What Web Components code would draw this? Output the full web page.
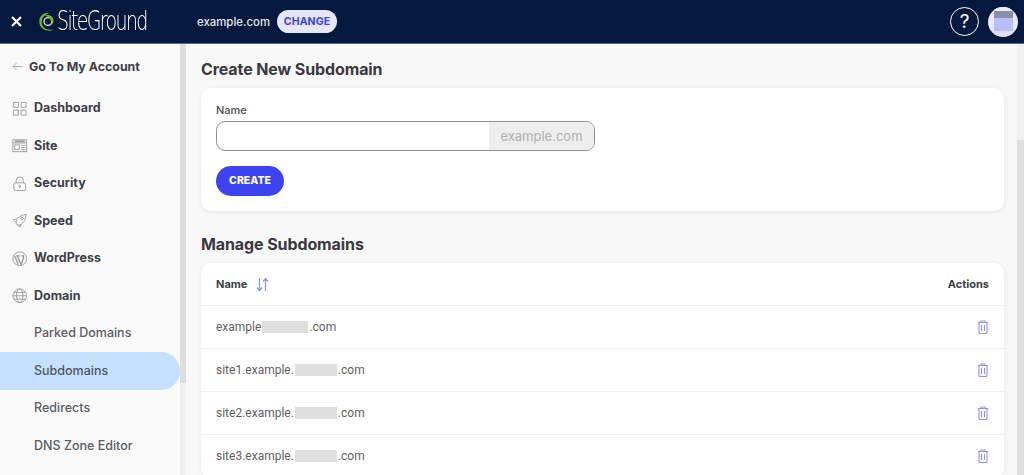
<!DOCTYPE html>
<html lang="en"><head><meta charset="utf-8"><title>Subdomains</title>
<style>
html,body{margin:0;padding:0;height:475px;overflow:hidden;background:#f8f8f8}
body{font-family:Inter,"Liberation Sans",sans-serif}
</style></head>
<body>
<sg-app></sg-app>
<script>
const ICONS={
dashboard:'<path d="M1.500 1.500h5.500v5.500h-5.500zM10 1.500h5.500v5.500h-5.500zM1.500 10h5.500v5.500h-5.500zM10 10h5.500v5.500h-5.500z"/>',
site:'<rect x="1" y="2" width="15" height="13"/><path d="M1 5.500h15"/><rect x="3" y="7.500" width="5" height="5"/><path d="M10 8h4.500M10 10.500h4.500M10 13h4.500"/><path d="M3 3.700h11" stroke-width="2"/>',
security:'<rect x="2" y="7.500" width="13" height="8.500" rx="2"/><path d="M4.500 7.500V5a4 4 0 0 1 8 0v2.500"/><circle cx="8.500" cy="11" r="1"/><path d="M8.500 12v1.500"/>',
speed:'<path d="M5 12.500C3 8 7 2.500 15.500 1.500 15 10 10 14 5.500 13z"/><path d="M5 6.500 1.500 7.500 4 10M10 12l-1 3.500-3-2.500"/><circle cx="11" cy="6" r="1.300"/>',
wp:'<circle cx="8.500" cy="8.500" r="7.500"/><path d="M3 5.500 7 15M6 5.500 10 15l2.500-7c.5-1.500 0-2.500-.5-3.500M4.500 5.300h4M10 5.300h2" stroke-width="1.500"/>',
globe:'<circle cx="8.500" cy="8.500" r="7.500"/><ellipse cx="8.500" cy="8.500" rx="3.500" ry="7.500"/><path d="M1 8.500h15M2.200 4.800h12.600M2.200 12.200h12.600"/>'
};
function def(name,css,html,extra){
  const t=document.createElement('template');
  t.innerHTML=`<style>${css}</style>${html}`;
  customElements.define(name,class extends HTMLElement{
    constructor(){super();this.attachShadow({mode:'open'}).appendChild(t.content.cloneNode(true));}
    connectedCallback(){extra&&extra(this)}
  });
}
def('sg-top',`
:host{display:flex;align-items:center;height:43px;background:#04193d;border-bottom:1px solid #5d6b83;color:#fff}
.x{width:11px;height:11px;margin-left:11px;flex:none}
.logo{display:flex;align-items:center;margin-left:16px;width:132px;flex:none;overflow:hidden;height:43px}
.logo svg{flex:none}
.word{flex:none;font:200 25px/30px "DejaVu Sans",sans-serif;display:inline-block;letter-spacing:-2.200px;transform:scaleX(.76) scaleY(1.05);transform-origin:left center;white-space:nowrap;color:#fff}
.dom{margin-left:27px;font:500 11.400px/16px Inter,sans-serif;color:#e4e7ee}
.chg{margin-left:7px;height:23px;width:60px;border-radius:12px;background:#e6e6fd;color:#3d43f0;font:700 10.500px/23px Inter,sans-serif;text-align:center;letter-spacing:.1px}
.sp{flex:1}
.help{width:27px;height:27px;border:1.500px solid #fff;border-radius:50%;font:400 19px/27px Inter,sans-serif;text-align:center;margin-right:9px}
.ava{width:30px;height:30px;border-radius:50%;background:#e9e9fb;margin-right:6px;display:flex;justify-content:center;overflow:hidden}
.ava i{display:block;width:19px;height:30px;background:linear-gradient(#e9e9fb 0 4px,#8a90aa 4px 11px,#b9bff8 11px 24px,#dcdefa 24px)}
`,`<svg class="x" viewBox="0 0 11 11"><path d="M1 1l9 9M10 1l-9 9" stroke="#fff" stroke-width="2.200"/></svg>
<div class="logo"><svg width="19" height="23" viewBox="0 0 22 24" fill="none"><path d="M13 2C6 2 1.500 6 1.500 12c0 6 4 9.500 9.500 10.500 4 .5 6-.5 7-1-4 .5-10 0-12.500-4C3.500 14 4 8 8 5c2-1.500 4-2.500 5-3z" fill="#74b62e"/><circle cx="11.500" cy="12" r="4.500" stroke="#dfe6d8" stroke-width="1.600"/><path d="M8 5c5-2 10 1 10 6 0 2-1 4-2 5 0-5-2-9-8-11z" fill="#74b62e"/></svg><span class="word">SiteGround</span></div>
<span class="dom">example.com</span><span class="chg">CHANGE</span><span class="sp"></span>
<span class="help">?</span><span class="ava"><i></i></span>`);
def('sg-nav-item',`
:host{display:flex;align-items:center;height:37.500px;padding-left:12px;font:700 12.500px/16px Inter,sans-serif;color:#3e3e46;gap:6.500px}
:host([sub]){font-weight:500;padding-left:34px;color:#5c5c62}
:host([active]){background:#c5e1fd;border-radius:0 19px 19px 0;color:#4f5566}
svg{width:15.500px;height:15.500px;fill:none;stroke:#9a9a9a;stroke-width:1;flex:none}
`,`<svg viewBox="0 0 17 17"></svg><slot></slot>`,el=>{
  const s=el.shadowRoot.querySelector('svg');
  if(el.hasAttribute('icon'))s.innerHTML=ICONS[el.getAttribute('icon')];else s.remove();
});
def('sg-side',`
:host{display:flex;flex:none;width:186px;background:#fafafa;overflow:hidden}
.col{width:180px;flex:none}
.back{display:flex;align-items:center;gap:6px;height:45.500px;padding:0 0 0 12px;font:700 12.400px/16px Inter,sans-serif;color:#3e3e46}
.back svg{width:11px;height:9px;flex:none}
.bar{width:6px;flex:none;background:#f0f0f0;display:flex}
.bar i{display:block;width:6px;height:339px;background:#dedede}
`,`<div class="col"><div class="back"><svg viewBox="0 0 11 9" fill="none" stroke="#b0b0b0"><path d="M10.500 4.500H1M4.500 1 1 4.500 4.500 8"/></svg><span>Go To My Account</span></div><slot></slot></div><div class="bar"><i></i></div>`);
def('sg-card',`
:host{display:block;flex:none;background:#fff;border-radius:10px;box-shadow:0 1px 5px rgba(0,0,0,.07)}
`,`<slot></slot>`);
def('sg-heading',`
:host{display:block;flex:none;font:700 16px/20px Inter,sans-serif;color:#39393f;letter-spacing:-.1px}
`,`<slot></slot>`);
def('sg-form',`
:host{display:block;padding:15px 15px 15px;height:93px}
label{display:block;font:500 11px/15px Inter,sans-serif;color:#4a4a50;margin-bottom:3px}
.f{display:flex;width:379px;height:30px;box-sizing:border-box;border:1px solid #8f8f8f;border-radius:9px;overflow:hidden}
.i{flex:1}
.s{width:105px;background:#eeeeee;color:#b0b0b0;font:400 13px/28px Inter,sans-serif;text-align:center}
button{display:block;margin-top:15px;width:68px;height:30px;border:0;border-radius:15px;background:#3c43f0;color:#fff;font:800 10.500px/30px Inter,sans-serif;padding:0}
`,`<label>Name</label><div class="f"><div class="i"></div><div class="s">example.com</div></div><button>CREATE</button>`);
def('sg-head-row',`
:host{display:flex;align-items:center;height:42px;padding:0 15px;border-bottom:1px solid #f0f0f0;font:700 11px/14px Inter,sans-serif;color:#3e3e46}
svg{margin-left:9px}
.sp{flex:1}
`,`<span>Name</span><svg width="13" height="15" viewBox="0 0 13 15" fill="none" stroke="#8a8ef8" stroke-width="1.200"><path d="M3.500 1v12.500M1 10.500l2.500 3 2.500-3M9.500 14V1.500M7 4.500l2.500-3 2.500 3"/></svg><span class="sp"></span><span>Actions</span>`);
def('sg-row',`
:host{display:flex;align-items:center;height:42px;padding:0 15px;border-bottom:1px solid #f0f0f0;font:400 12px/16px Roboto,sans-serif;color:#5f5f5f}
.b{display:inline-block;height:12px;background:#dfdfdf;filter:blur(.6px);margin:0 1px}
.sp{flex:1}
`,`<span><slot name="a"></slot></span><span class="b"></span><span>.com</span><span class="sp"></span><svg width="12" height="14" viewBox="0 0 12 14" fill="none" stroke="#8f93f8" stroke-width="1.100"><path d="M.8 2.500h10.400M4 2.500V1h4v1.500M2 2.500v10a1 1 0 0 0 1 1h6a1 1 0 0 0 1-1v-10M4.500 5v6M7.500 5v6"/></svg>`,el=>{
  el.shadowRoot.querySelector('.b').style.width=(el.getAttribute('w')||'42')+'px';
});
def('sg-main',`
:host{display:flex;flex-direction:column;flex:1;min-width:0;padding:15px 13px 0 15px;box-sizing:border-box;height:431px;overflow:hidden;background:#f8f8f8}
sg-heading{margin-bottom:9px}
.g{height:23px;flex:none}
`,`<sg-heading>Create New Subdomain</sg-heading><sg-card><sg-form></sg-form></sg-card><div class="g"></div><sg-heading>Manage Subdomains</sg-heading><sg-card><sg-head-row></sg-head-row><slot></slot></sg-card>`);
def('sg-scroll',`
:host{display:block;flex:none;width:7px;background:#f1f1f1}
i{display:block;margin-top:96px;height:336px;background:#dfdfdf}
`,`<i></i>`);
def('sg-app',`
:host{display:block;width:1024px;height:475px;overflow:hidden}
.b{display:flex;height:431px}
`,`<sg-top></sg-top><div class="b"><sg-side>
<sg-nav-item icon="dashboard">Dashboard</sg-nav-item><sg-nav-item icon="site">Site</sg-nav-item><sg-nav-item icon="security">Security</sg-nav-item><sg-nav-item icon="speed">Speed</sg-nav-item><sg-nav-item icon="wp">WordPress</sg-nav-item><sg-nav-item icon="globe">Domain</sg-nav-item>
<sg-nav-item sub>Parked Domains</sg-nav-item><sg-nav-item sub active>Subdomains</sg-nav-item><sg-nav-item sub>Redirects</sg-nav-item><sg-nav-item sub>DNS Zone Editor</sg-nav-item>
</sg-side><sg-main>
<sg-row w="46"><span slot="a">example</span></sg-row><sg-row w="42"><span slot="a">site1.example.</span></sg-row><sg-row w="42"><span slot="a">site2.example.</span></sg-row><sg-row w="42"><span slot="a">site3.example.</span></sg-row>
</sg-main><sg-scroll></sg-scroll></div>`);
</script>
</body></html>
